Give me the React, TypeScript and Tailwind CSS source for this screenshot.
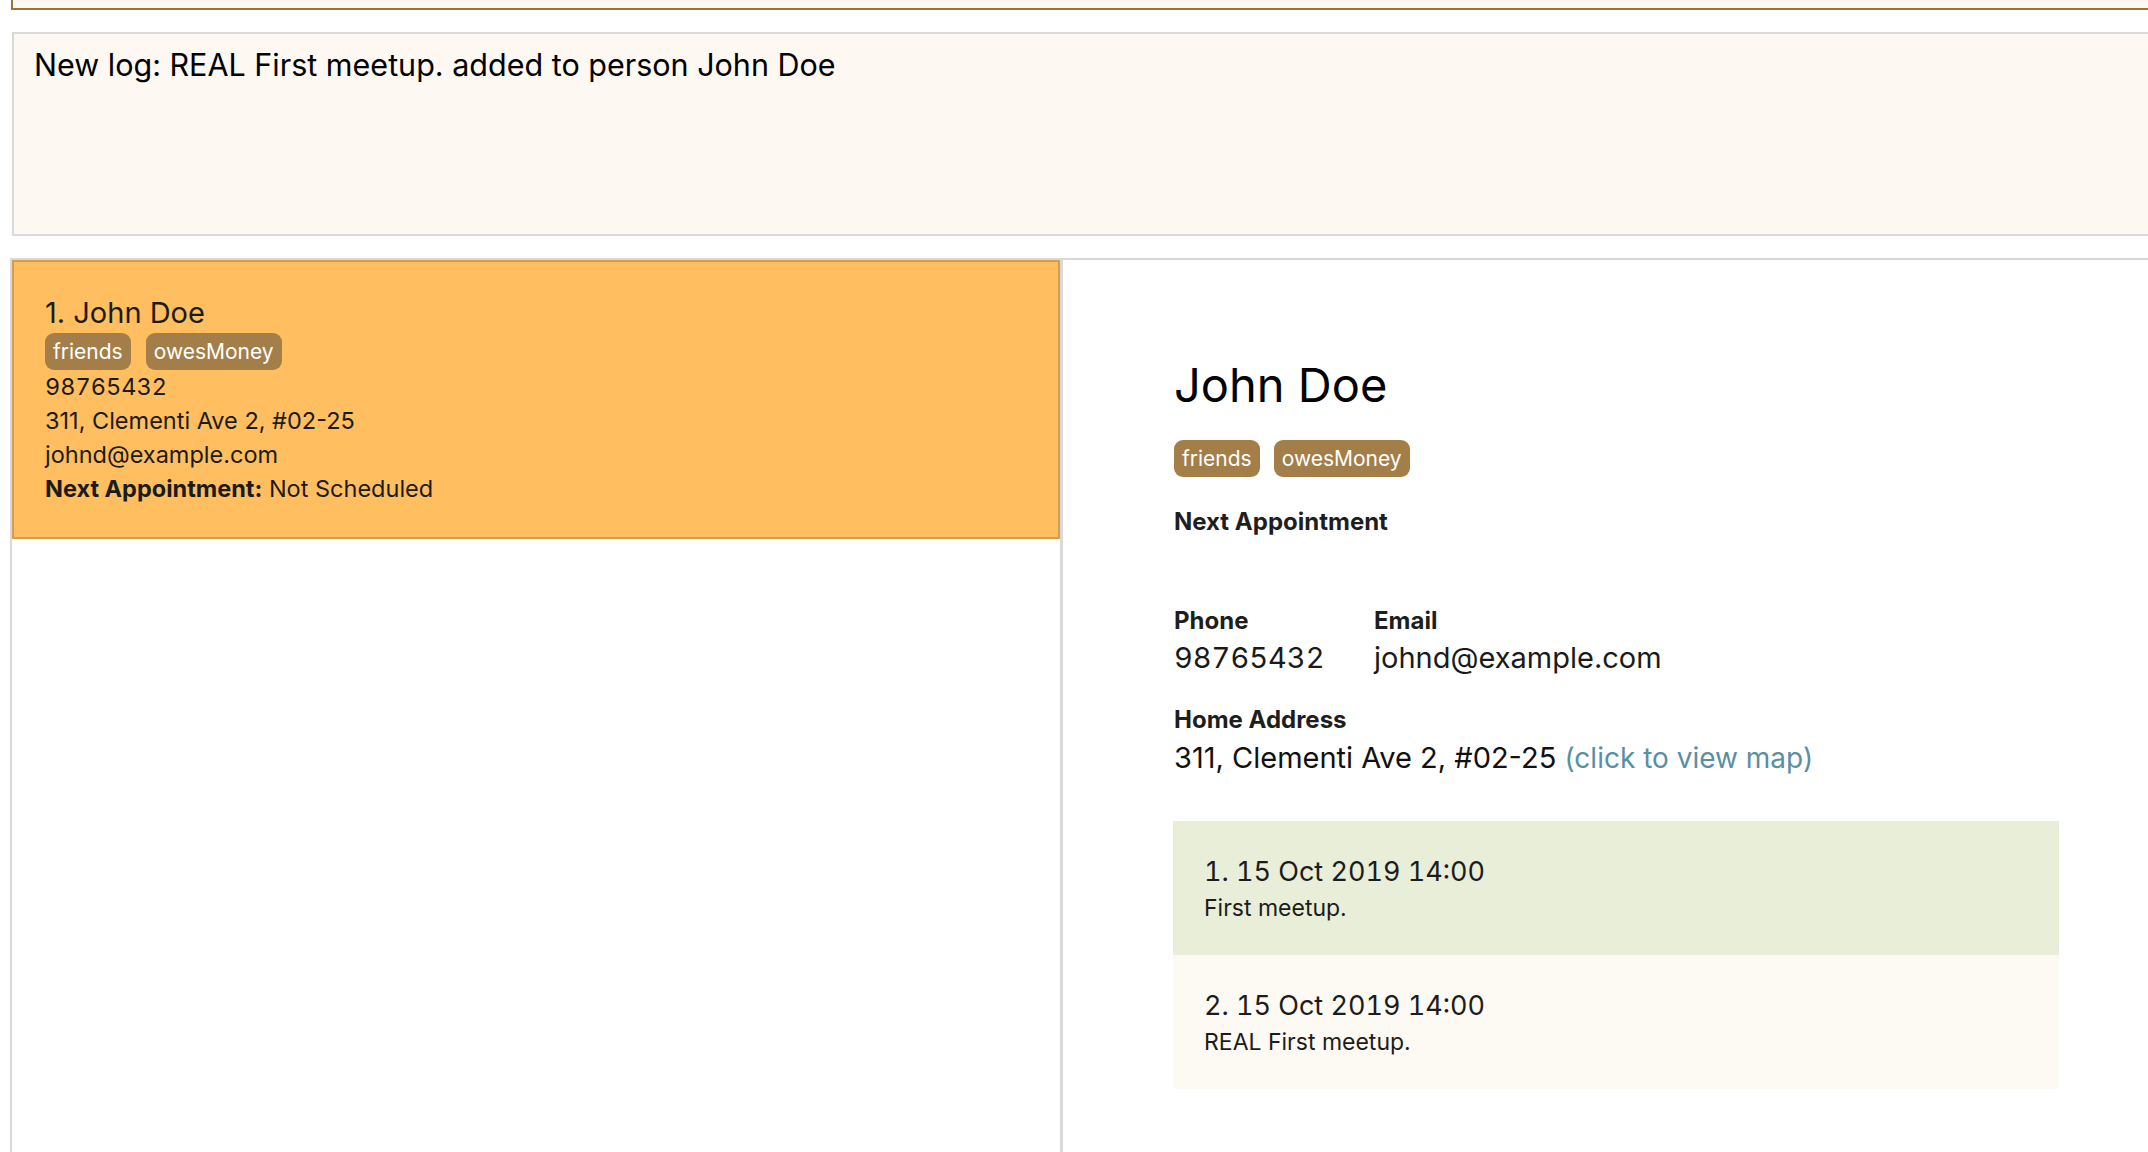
const FONT = "font-['Inter','Noto_Sans',sans-serif]";

const Tag = ({ label }: { label: string }) => (
  <span className="inline-flex h-[37px] items-center rounded-[9px] bg-[#a47e48] px-[8px] text-[21px] leading-none text-white">
    {label}
  </span>
);

const PersonCard = () => (
  <div className="h-[279px] border-2 border-[#d59c4c] bg-[#ffbe5f] pl-[31px] pt-[34px] text-[#1b1b1b]">
    <div className="text-[29px] leading-[34px]">1. John Doe</div>
    <div className="mt-[3px] flex gap-[15px]">
      <Tag label="friends" />
      <Tag label="owesMoney" />
    </div>
    <div className="text-[23.5px] leading-[34px]">
      <div className="tabular-nums">98765432</div>
      <div>311, Clementi Ave 2, #02-25</div>
      <div>johnd@example.com</div>
      <div>
        <span className="font-bold">Next Appointment:</span> Not Scheduled
      </div>
    </div>
  </div>
);

const LOGS = [
  { title: "1. 15 Oct 2019 14:00", text: "First meetup.", bg: "bg-[#e8eed8]" },
  { title: "2. 15 Oct 2019 14:00", text: "REAL First meetup.", bg: "bg-[#fdf9f3]" },
];

const Detail = () => (
  <div className="flex-1 border-t-2 border-[#d9d9d9] pl-[111px] pt-[97px] text-black">
    <div className="text-[47px] leading-[56px]">John Doe</div>
    <div className="mt-[27px] flex gap-[14px]">
      <Tag label="friends" />
      <Tag label="owesMoney" />
    </div>
    <div className="mt-[30px] text-[24px] font-bold leading-[30px] text-[#1e1e1e]">Next Appointment</div>

    <div className="mt-[69px] grid grid-cols-[200px_auto] justify-start">
      <div className="text-[24px] font-bold leading-[30px] text-[#1e1e1e]">Phone</div>
      <div className="text-[24px] font-bold leading-[30px] text-[#1e1e1e]">Email</div>
      <div className="mt-[3px] text-[29px] leading-[38px] tabular-nums text-[#1a1a1a]">98765432</div>
      <div className="mt-[3px] text-[29px] leading-[38px] text-[#1a1a1a]">johnd@example.com</div>
    </div>

    <div className="mt-[28px] text-[24px] font-bold leading-[30px] text-[#1e1e1e]">Home Address</div>
    <div className="mt-[4px] text-[29px] leading-[38px] text-[#111]">
      311, Clementi Ave 2, #02-25 <span className="text-[28px] text-[#5a8fa3]">(click to view map)</span>
    </div>

    <div className="mt-[44px] ml-[-1px] w-[886px]">
      {LOGS.map((log) => (
        <div key={log.title} className={`h-[134px] pl-[31px] pt-[34px] ${log.bg}`}>
          <div className="text-[27px] leading-[34px] tabular-nums text-[#1c1c1c]">{log.title}</div>
          <div className="mt-[4px] text-[23px] leading-[30px] text-[#1c1c1c]">{log.text}</div>
        </div>
      ))}
    </div>
  </div>
);

export default function App() {
  return (
    <div className={`h-[1152px] w-[2148px] overflow-hidden bg-white ${FONT}`}>
      {/* command box, only its bottom edge shows */}
      <div className="ml-[11px] h-[10px] border-b-2 border-l-2 border-[#98763a] bg-[#fef8f0]" />

      {/* result display */}
      <div className="ml-[12px] mt-[22px] h-[204px] border-2 border-r-0 border-[#d9d9d9] bg-[#fdf8f2] pl-[20px] pt-[13px]">
        <div className="text-[30.5px] leading-[36px] text-black">New log: REAL First meetup. added to person John Doe</div>
      </div>

      <div className="ml-[10px] mt-[22px] flex h-[900px]">
        <div className="w-[1053px] border-l-2 border-r-[3px] border-t-2 border-[#d9d9d9]">
          <PersonCard />
        </div>
        <Detail />
      </div>
    </div>
  );
}
